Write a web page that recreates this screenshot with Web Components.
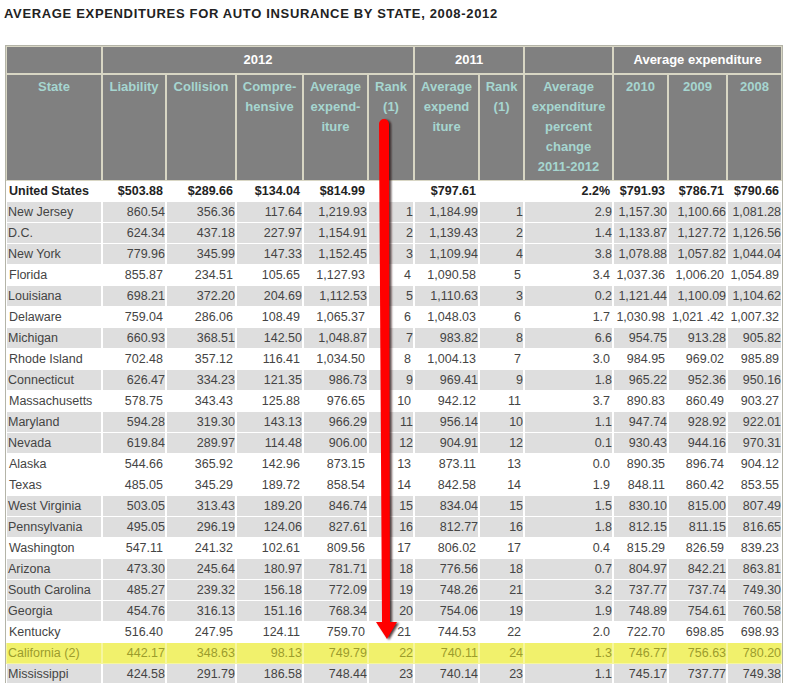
<!DOCTYPE html>
<html>
<head>
<meta charset="utf-8">
<title>Average expenditures for auto insurance</title>
<style>
  html, body { margin: 0; padding: 0; background: #fff; height: 683px; overflow: hidden; }
</style>
</head>
<body>
<auto-insurance-report></auto-insurance-report>

<template id="report-template">
  <style>
    :host {
      display: block;
      position: relative;
      width: 789px;
      height: 683px;
      overflow: hidden;
      font-family: "Liberation Sans", Arial, sans-serif;
    }
    h1 {
      margin: 0;
      padding: 6px 0 0 4px;
      height: 38px;
      box-sizing: border-box;
      font-size: 13px;
      line-height: 16px;
      font-weight: bold;
      letter-spacing: .66px;
      white-space: nowrap;
      color: #222;
    }
    .wrap { padding: 7px 0 0 5px; }
  </style>
  <h1>AVERAGE EXPENDITURES FOR AUTO INSURANCE BY STATE, 2008-2012</h1>
  <div class="wrap"><expend-table></expend-table></div>
  <rank-arrow></rank-arrow>
</template>

<script>
  // Data
  const STATES = [
    ['New Jersey','860.54','356.36','117.64','1,219.93','1','1,184.99','1','2.9','1,157.30','1,100.66','1,081.28'],
    ['D.C.','624.34','437.18','227.97','1,154.91','2','1,139.43','2','1.4','1,133.87','1,127.72','1,126.56'],
    ['New York','779.96','345.99','147.33','1,152.45','3','1,109.94','4','3.8','1,078.88','1,057.82','1,044.04'],
    ['Florida','855.87','234.51','105.65','1,127.93','4','1,090.58','5','3.4','1,037.36','1,006.20','1,054.89'],
    ['Louisiana','698.21','372.20','204.69','1,112.53','5','1,110.63','3','0.2','1,121.44','1,100.09','1,104.62'],
    ['Delaware','759.04','286.06','108.49','1,065.37','6','1,048.03','6','1.7','1,030.98','1,021 .42','1,007.32'],
    ['Michigan','660.93','368.51','142.50','1,048.87','7','983.82','8','6.6','954.75','913.28','905.82'],
    ['Rhode Island','702.48','357.12','116.41','1,034.50','8','1,004.13','7','3.0','984.95','969.02','985.89'],
    ['Connecticut','626.47','334.23','121.35','986.73','9','969.41','9','1.8','965.22','952.36','950.16'],
    ['Massachusetts','578.75','343.43','125.88','976.65','10','942.12','11','3.7','890.83','860.49','903.27'],
    ['Maryland','594.28','319.30','143.13','966.29','11','956.14','10','1.1','947.74','928.92','922.01'],
    ['Nevada','619.84','289.97','114.48','906.00','12','904.91','12','0.1','930.43','944.16','970.31'],
    ['Alaska','544.66','365.92','142.96','873.15','13','873.11','13','0.0','890.35','896.74','904.12'],
    ['Texas','485.05','345.29','189.72','858.54','14','842.58','14','1.9','848.11','860.42','853.55'],
    ['West Virginia','503.05','313.43','189.20','846.74','15','834.04','15','1.5','830.10','815.00','807.49'],
    ['Pennsylvania','495.05','296.19','124.06','827.61','16','812.77','16','1.8','812.15','811.15','816.65'],
    ['Washington','547.11','241.32','102.61','809.56','17','806.02','17','0.4','815.29','826.59','839.23'],
    ['Arizona','473.30','245.64','180.97','781.71','18','776.56','18','0.7','804.97','842.21','863.81'],
    ['South Carolina','485.27','239.32','156.18','772.09','19','748.26','21','3.2','737.77','737.74','749.30'],
    ['Georgia','454.76','316.13','151.16','768.34','20','754.06','19','1.9','748.89','754.61','760.58'],
    ['Kentucky','516.40','247.95','124.11','759.70','21','744.53','22','2.0','722.70','698.85','698.93'],
    ['California (2)','442.17','348.63','98.13','749.79','22','740.11','24','1.3','746.77','756.63','780.20'],
    ['Mississippi','424.58','291.79','186.58','748.44','23','740.14','23','1.1','745.17','737.77','749.38']
  ];
  const TOTAL = ['United States','$503.88','$289.66','$134.04','$814.99','','$797.61','','2.2%','$791.93','$786.71','$790.66'];
  const COLS = [96,64,70,67,65,46,65,45,89,55,59,55];
  // rows drawn on white, the rest are grey
  const WHITE = ['Florida','Delaware','Rhode Island','Massachusetts','Alaska','Texas','Washington','Kentucky'];

  class ExpendTable extends HTMLElement {
    constructor() {
      super();
      const shadow = this.attachShadow({ mode: 'open' });
      const head = `
        <tr class="top">
          <th></th><th colspan="5">2012</th><th colspan="2">2011</th><th></th><th colspan="3">Average expenditure</th>
        </tr>
        <tr class="sub">
          <th>State</th><th>Liability</th><th>Collision</th><th>Compre-<br>hensive</th><th>Average<br>expend-<br>iture</th>
          <th>Rank<br>(1)</th><th>Average<br>expend<br>iture</th><th>Rank<br>(1)</th>
          <th>Average<br>expenditure<br>percent<br>change<br>2011-2012</th><th>2010</th><th>2009</th><th>2008</th>
        </tr>`;
      const cells = r => r.map(v => `<td>${v}</td>`).join('');
      const rows = STATES.map(r => {
        let cls = WHITE.includes(r[0]) ? 'plain' : 'grey';
        if (r[0].startsWith('California')) cls = 'hi';
        return `<tr class="${cls}">${cells(r)}</tr>`;
      }).join('');
      shadow.innerHTML = `
        <style>
          :host { display: block; }
          table {
            border-collapse: separate;
            border-spacing: 0;
            table-layout: fixed;
            width: 778px;
            border: 1px solid #b4b4a8;
            font-size: 12.5px;
            color: #444;
          }
          th {
            background: #808080;
            border: 1px solid #d8d6c4;
            font-size: 13px;
            line-height: 20px;
            vertical-align: top;
            padding: 2px 1px 0;
            box-sizing: border-box;
            color: #a6d6d0;
            font-weight: bold;
            text-align: center;
          }
          tr.top th { color: #fff; height: 28px; padding-top: 3px; }
          tr.sub th { height: 107px; }
          td {
            height: 21px;
            padding: 0 0 0 1px;
            box-sizing: border-box;
            text-align: right;
            line-height: 20px;
            white-space: nowrap;
            border-left: 1px solid #fff;
            border-right: 1px solid #fff;
            border-bottom: 1px solid #fff;
          }
          td:first-child { text-align: left; }
          tr.total td { font-weight: bold; color: #222; padding: 0 2px 0 2px; }
          tr.plain td { padding: 0 2px 0 2px; }
          tr.grey td { background: #dedede; }
          tr.hi td { background: #f1f16c; color: #9c9c2c; border-color: #f6f6a0; }
        </style>
        <table>
          <colgroup>${COLS.map(w => `<col style="width:${w}px">`).join('')}</colgroup>
          ${head}
          <tr class="total">${cells(TOTAL)}</tr>
          ${rows}
        </table>`;
    }
  }

  // Red annotation arrow, lies over the rank column
  class RankArrow extends HTMLElement {
    constructor() {
      super();
      const shadow = this.attachShadow({ mode: 'open' });
      shadow.innerHTML = `
        <style>
          :host { position: absolute; left: 360px; top: 110px; width: 50px; height: 540px; display: block; }
          svg { display: block; overflow: visible; }
        </style>
        <svg width="50" height="540" viewBox="0 0 50 540">
          <defs><filter id="s" x="-40%" y="-5%" width="200%" height="110%"><feGaussianBlur stdDeviation="1.3"/></filter></defs>
          <path d="M19 14a5 5 0 0 1 10 0L30 512h7L27 529 16 512h6z" fill="#200808" opacity=".8" filter="url(#s)" transform="translate(2 1)"/>
          <path d="M19 14a5 5 0 0 1 10 0L30 512h7L27 529 16 512h6z" fill="#f00"/>
        </svg>`;
    }
  }

  class AutoInsuranceReport extends HTMLElement {
    constructor() {
      super();
      const shadow = this.attachShadow({ mode: 'open' });
      const template = document.getElementById('report-template');
      shadow.appendChild(template.content.cloneNode(true));
    }
  }

  customElements.define('expend-table', ExpendTable);
  customElements.define('rank-arrow', RankArrow);
  customElements.define('auto-insurance-report', AutoInsuranceReport);
</script>
</body>
</html>
